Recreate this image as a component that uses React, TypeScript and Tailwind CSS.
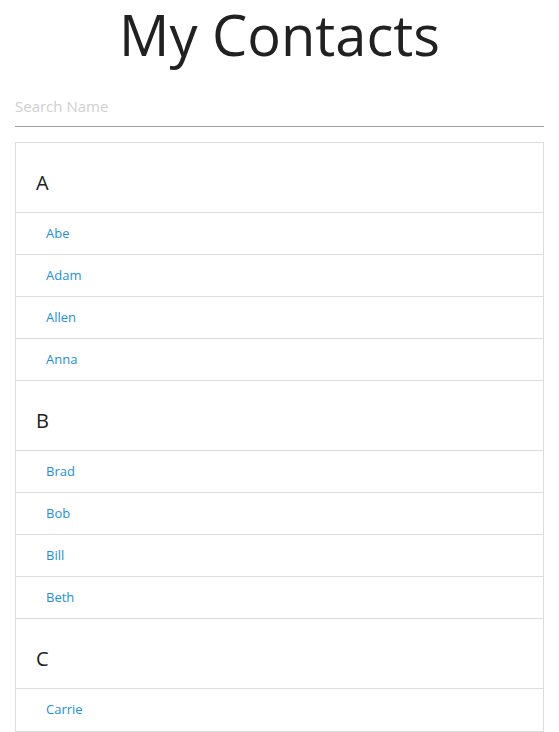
const groups: { letter: string; names: string[] }[] = [
  { letter: "A", names: ["Abe", "Adam", "Allen", "Anna"] },
  { letter: "B", names: ["Brad", "Bob", "Bill", "Beth"] },
  { letter: "C", names: ["Carrie"] },
];

export default function App() {
  return (
    <div className="px-[15px] font-['Open_Sans',sans-serif] text-[#212121]">
      <h1 className="text-center text-[56px] leading-[68px] font-normal">My Contacts</h1>

      <input
        type="text"
        placeholder="Search Name"
        className="mt-[18px] w-full h-[41px] border-b border-[#9e9e9e] text-[15px] outline-none placeholder:text-[#cfcfcf]"
      />

      <ul className="mt-[15px] border border-[#dddddd]">
        {groups.map((group) => (
          <li key={group.letter}>
            <div className="h-[70px] flex items-center pt-[10px] pl-[20px] text-[20px] border-b border-[#dddddd]">
              {group.letter}
            </div>
            {group.names.map((name, i) => (
              <div
                key={name}
                className={
                  "h-[42px] flex items-center pl-[30px] text-[13px] text-[#1a8fe0]" +
                  (i < group.names.length - 1 || group.letter !== "C" ? " border-b border-[#dddddd]" : "")
                }
              >
                {name}
              </div>
            ))}
          </li>
        ))}
      </ul>
    </div>
  );
}
